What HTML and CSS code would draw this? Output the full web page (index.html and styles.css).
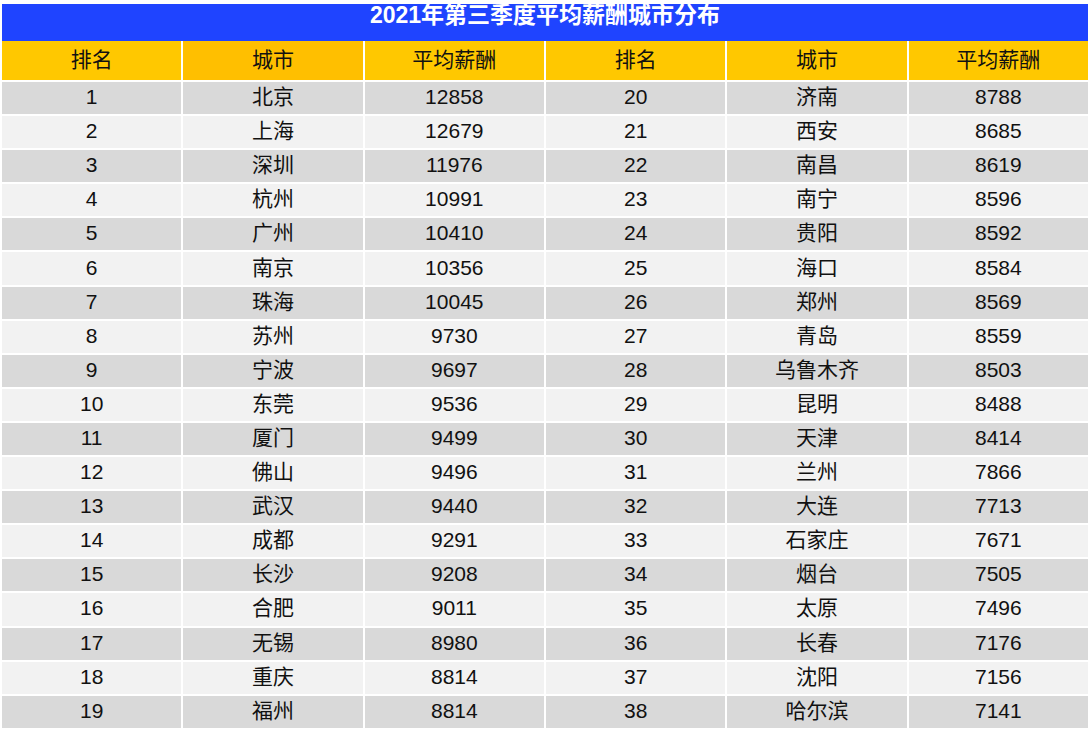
FILE: index.html
```html
<!DOCTYPE html>
<html lang="zh-CN">
<head>
<meta charset="utf-8">
<title>2021年第三季度平均薪酬城市分布</title>
<link rel="stylesheet" href="styles.css">
</head>
<body>
<div class="sheet">
  <div class="title">2021年第三季度平均薪酬城市分布</div>
  <div class="grid">
    <div class="cell head">排名</div><div class="cell head sel">城市</div><div class="cell head">平均薪酬</div><div class="cell head">排名</div><div class="cell head">城市</div><div class="cell head">平均薪酬</div>
    <div class="cell odd">1</div><div class="cell odd">北京</div><div class="cell odd">12858</div><div class="cell odd">20</div><div class="cell odd">济南</div><div class="cell odd">8788</div>
    <div class="cell even">2</div><div class="cell even">上海</div><div class="cell even">12679</div><div class="cell even">21</div><div class="cell even">西安</div><div class="cell even">8685</div>
    <div class="cell odd">3</div><div class="cell odd">深圳</div><div class="cell odd">11976</div><div class="cell odd">22</div><div class="cell odd">南昌</div><div class="cell odd">8619</div>
    <div class="cell even">4</div><div class="cell even">杭州</div><div class="cell even">10991</div><div class="cell even">23</div><div class="cell even">南宁</div><div class="cell even">8596</div>
    <div class="cell odd">5</div><div class="cell odd">广州</div><div class="cell odd">10410</div><div class="cell odd">24</div><div class="cell odd">贵阳</div><div class="cell odd">8592</div>
    <div class="cell even">6</div><div class="cell even">南京</div><div class="cell even">10356</div><div class="cell even">25</div><div class="cell even">海口</div><div class="cell even">8584</div>
    <div class="cell odd">7</div><div class="cell odd">珠海</div><div class="cell odd">10045</div><div class="cell odd">26</div><div class="cell odd">郑州</div><div class="cell odd">8569</div>
    <div class="cell even">8</div><div class="cell even">苏州</div><div class="cell even">9730</div><div class="cell even">27</div><div class="cell even">青岛</div><div class="cell even">8559</div>
    <div class="cell odd">9</div><div class="cell odd">宁波</div><div class="cell odd">9697</div><div class="cell odd">28</div><div class="cell odd">乌鲁木齐</div><div class="cell odd">8503</div>
    <div class="cell even">10</div><div class="cell even">东莞</div><div class="cell even">9536</div><div class="cell even">29</div><div class="cell even">昆明</div><div class="cell even">8488</div>
    <div class="cell odd">11</div><div class="cell odd">厦门</div><div class="cell odd">9499</div><div class="cell odd">30</div><div class="cell odd">天津</div><div class="cell odd">8414</div>
    <div class="cell even">12</div><div class="cell even">佛山</div><div class="cell even">9496</div><div class="cell even">31</div><div class="cell even">兰州</div><div class="cell even">7866</div>
    <div class="cell odd">13</div><div class="cell odd">武汉</div><div class="cell odd">9440</div><div class="cell odd">32</div><div class="cell odd">大连</div><div class="cell odd">7713</div>
    <div class="cell even">14</div><div class="cell even">成都</div><div class="cell even">9291</div><div class="cell even">33</div><div class="cell even">石家庄</div><div class="cell even">7671</div>
    <div class="cell odd">15</div><div class="cell odd">长沙</div><div class="cell odd">9208</div><div class="cell odd">34</div><div class="cell odd">烟台</div><div class="cell odd">7505</div>
    <div class="cell even">16</div><div class="cell even">合肥</div><div class="cell even">9011</div><div class="cell even">35</div><div class="cell even">太原</div><div class="cell even">7496</div>
    <div class="cell odd">17</div><div class="cell odd">无锡</div><div class="cell odd">8980</div><div class="cell odd">36</div><div class="cell odd">长春</div><div class="cell odd">7176</div>
    <div class="cell even">18</div><div class="cell even">重庆</div><div class="cell even">8814</div><div class="cell even">37</div><div class="cell even">沈阳</div><div class="cell even">7156</div>
    <div class="cell odd">19</div><div class="cell odd">福州</div><div class="cell odd">8814</div><div class="cell odd">38</div><div class="cell odd">哈尔滨</div><div class="cell odd">7141</div>
  </div>
</div>
</body>
</html>
```
FILE: styles.css
```css
html, body {
  margin: 0;
  padding: 0;
  background: #ffffff;
}
body {
  font-family: "Liberation Sans", "Noto Sans CJK SC", sans-serif;
  color: #111111;
}
.sheet {
  width: 1086px;
  margin-left: 2px;
  padding-top: 4px;
}
.title {
  height: 37px;
  background: #1f44ff;
  color: #ffffff;
  font-weight: bold;
  font-size: 23px;
  line-height: 22px;
  text-align: center;
  white-space: nowrap;
}
.grid {
  display: grid;
  grid-template-columns: repeat(6, 1fr);
  grid-template-rows: 39px repeat(19, 32.1px);
  column-gap: 2px;
  row-gap: 2px;
  background: #ffffff;
}
.cell {
  display: flex;
  align-items: center;
  justify-content: center;
  font-size: 21px;
  line-height: 1;
  padding-bottom: 3px;
  white-space: nowrap;
}
.head {
  background: #ffc800;
}
.head.sel {
  background: #ffbf00;
}
.odd {
  background: #d9d9d9;
}
.even {
  background: #f2f2f2;
}
```
